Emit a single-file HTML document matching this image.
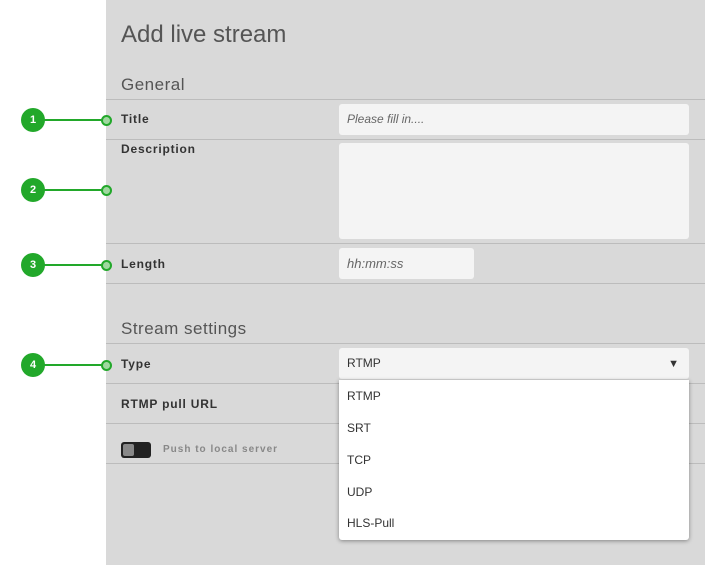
<!DOCTYPE html>
<html><head><style>
body{margin:0;width:705px;height:565px;background:#fff;font-family:"Liberation Sans",sans-serif;position:relative;overflow:hidden}
.panel{position:absolute;left:106px;top:0;width:599px;height:565px;background:#d9d9d9}
.a{position:absolute}
.hr{position:absolute;left:106px;width:599px;height:1px;background:#bcbcbc}
.lbl{position:absolute;left:121px;font-size:12px;font-weight:bold;color:#333;letter-spacing:.8px}
.inp{position:absolute;background:#f4f4f4;border-radius:3px;font-size:12px;color:#666;font-style:italic;box-sizing:border-box;padding-left:8px}
.c{position:absolute;width:24px;height:24px;border-radius:50%;background:#22a82a;color:#fff;font-size:11px;font-weight:bold;text-align:center;line-height:24px}
.ln{position:absolute;left:40px;width:64px;height:2px;background:#22a82a}
.dot{position:absolute;left:101px;width:7px;height:7px;border-radius:50%;border:2px solid #22a82a;background:#9fd89f}
.opt{position:absolute;left:8px;font-size:12px;color:#333}
</style></head><body>
<div class="panel"></div>
<div class="a" style="left:121px;top:21px;font-size:24px;color:#555">Add live stream</div>
<div class="a" style="left:121px;top:75px;font-size:17px;color:#555;letter-spacing:.5px">General</div>
<div class="hr" style="top:99px"></div>
<div class="hr" style="top:139px"></div>
<div class="hr" style="top:243px"></div>
<div class="hr" style="top:283px"></div>
<div class="a" style="left:121px;top:319px;font-size:17px;color:#555;letter-spacing:.5px">Stream settings</div>
<div class="hr" style="top:343px"></div>
<div class="hr" style="top:383px"></div>
<div class="hr" style="top:423px"></div>
<div class="hr" style="top:463px"></div>
<div class="lbl" style="top:112px">Title</div>
<div class="lbl" style="top:142px">Description</div>
<div class="lbl" style="top:257px">Length</div>
<div class="lbl" style="top:357px">Type</div>
<div class="lbl" style="top:397px">RTMP pull URL</div>
<div class="inp" style="left:339px;top:104px;width:350px;height:31px;line-height:31px">Please fill in....</div>
<div class="inp" style="left:339px;top:143px;width:350px;height:96px"></div>
<div class="inp" style="left:339px;top:248px;width:135px;height:31px;line-height:31px;font-size:13px">hh:mm:ss</div>
<div class="inp" style="left:339px;top:348px;width:350px;height:31px;line-height:31px;font-style:normal;color:#333">RTMP<span style="position:absolute;right:10px;top:1px;font-size:11px">▼</span></div>
<div class="a" style="left:121px;top:442px;width:30px;height:16px;border-radius:3px;background:#222"><div style="position:absolute;left:2px;top:2px;width:11px;height:12px;border-radius:2px;background:#888"></div></div>
<div class="a" style="left:163px;top:444px;font-size:10px;font-weight:bold;color:#888;letter-spacing:1px">Push to local server</div>
<div class="a" style="left:339px;top:380px;width:350px;height:160px;background:#fff;border-radius:0 0 3px 3px;box-shadow:0 1px 4px rgba(0,0,0,.4)">
<div class="opt" style="top:9px">RTMP</div>
<div class="opt" style="top:41px">SRT</div>
<div class="opt" style="top:73px">TCP</div>
<div class="opt" style="top:105px">UDP</div>
<div class="opt" style="top:136px">HLS-Pull</div>
</div>
<div class="ln" style="top:119px"></div><div class="dot" style="top:115px"></div><div class="c" style="left:21px;top:108px">1</div>
<div class="ln" style="top:189px"></div><div class="dot" style="top:185px"></div><div class="c" style="left:21px;top:178px">2</div>
<div class="ln" style="top:264px"></div><div class="dot" style="top:260px"></div><div class="c" style="left:21px;top:253px">3</div>
<div class="ln" style="top:364px"></div><div class="dot" style="top:360px"></div><div class="c" style="left:21px;top:353px">4</div>
</body></html>
